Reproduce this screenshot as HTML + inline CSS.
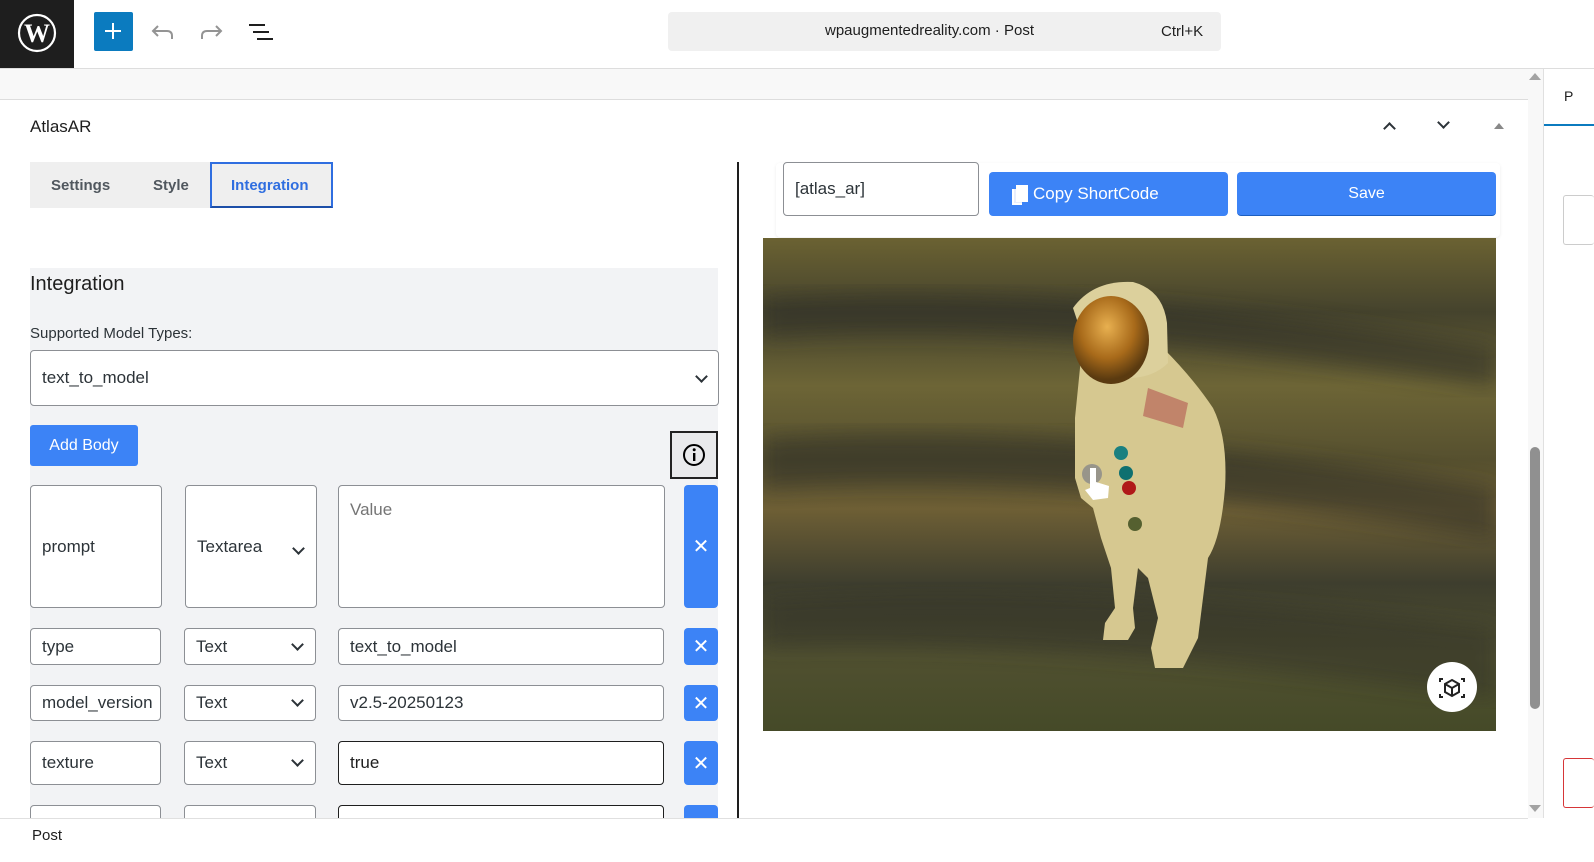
<!DOCTYPE html>
<html><head><meta charset="utf-8"><style>
*{box-sizing:border-box;margin:0;padding:0}
body{width:1594px;height:862px;overflow:hidden;background:#fff;font-family:"Liberation Sans",sans-serif;color:#1e1e1e;position:relative}
.a{position:absolute}
.inp{position:absolute;background:#fff;border:1px solid #8c8f94;border-radius:4px;font-size:17px;color:#2c3338;padding-left:11px;display:flex;align-items:center}
.x{position:absolute;background:#3c83f6;border-radius:4px;color:#fff;font-size:20px;display:flex;align-items:center;justify-content:center}
.chev{position:absolute;width:9px;height:9px;border-right:2px solid #2c3338;border-bottom:2px solid #2c3338;transform:rotate(45deg)}
</style></head><body>
<!-- top bar -->
<div class="a" style="left:0;top:0;width:74px;height:68px;background:#1e1e1e"></div>
<svg class="a" style="left:17px;top:13px" width="40" height="40" viewBox="0 0 40 40"><circle cx="20" cy="20" r="18" fill="none" stroke="#fff" stroke-width="2.2"/><text x="20" y="29" text-anchor="middle" font-family="Liberation Serif" font-weight="bold" font-size="26" fill="#fff">W</text></svg>
<div class="a" style="left:94px;top:12px;width:39px;height:39px;background:#0b7bbf;border-radius:2px"></div>
<div class="a" style="left:105px;top:30px;width:16px;height:2px;background:#fff"></div>
<div class="a" style="left:112px;top:23px;width:2px;height:16px;background:#fff"></div>
<svg class="a" style="left:150px;top:20px" width="26" height="24"><path d="M8 6 L3 11 L8 16 M3 11 H17 Q22 11 22 16 V19" fill="none" stroke="#949494" stroke-width="2"/></svg>
<svg class="a" style="left:198px;top:20px" width="26" height="24"><path d="M18 6 L23 11 L18 16 M23 11 H9 Q4 11 4 16 V19" fill="none" stroke="#949494" stroke-width="2"/></svg>
<div class="a" style="left:249px;top:24px;width:16px;height:2px;background:#1e1e1e"></div>
<div class="a" style="left:253px;top:31px;width:16px;height:2px;background:#1e1e1e"></div>
<div class="a" style="left:257px;top:38px;width:16px;height:2px;background:#1e1e1e"></div>
<div class="a" style="left:668px;top:12px;width:553px;height:39px;background:#f0f0f0;border-radius:4px"></div>
<div class="a" style="left:825px;top:22px;font-size:15px;color:#1e1e1e">wpaugmentedreality.com · Post</div>
<div class="a" style="left:1161px;top:23px;font-size:15px;color:#1e1e1e">Ctrl+K</div>
<div class="a" style="left:0;top:68px;width:1594px;height:1px;background:#ddd"></div>
<div class="a" style="left:0;top:69px;width:1528px;height:31px;background:#f8f8f8;border-bottom:1px solid #ddd"></div>
<!-- scrollbar & sidebar -->
<div class="a" style="left:1528px;top:69px;width:15px;height:749px;background:#f8f8f8"></div>
<div class="a" style="left:1530px;top:447px;width:10px;height:262px;background:#909090;border-radius:5px"></div>
<div class="a" style="left:1529px;top:73px;width:0;height:0;border:6px solid transparent;border-bottom:7px solid #a3a3a3;border-top:0"></div>
<div class="a" style="left:1529px;top:805px;width:0;height:0;border:6px solid transparent;border-top:7px solid #a3a3a3;border-bottom:0"></div>
<div class="a" style="left:1543px;top:69px;width:1px;height:749px;background:#e0e0e0"></div>
<div class="a" style="left:1544px;top:124px;width:50px;height:2px;background:#0b7bbf"></div>
<div class="a" style="left:1563px;top:195px;width:31px;height:50px;border:1px solid #ccc;border-radius:3px;border-right:0"></div>
<div class="a" style="left:1563px;top:758px;width:31px;height:50px;border:1px solid #d63638;border-radius:3px;border-right:0"></div>
<div class="a" style="left:1564px;top:88px;font-size:14px">P</div>
<!-- block header -->
<div class="a" style="left:30px;top:117px;font-size:17px;color:#1e1e1e">AtlasAR</div>
<div class="chev" style="left:1385px;top:124px;transform:rotate(225deg)"></div>
<div class="chev" style="left:1439px;top:118px"></div>
<div class="a" style="left:1494px;top:123px;width:0;height:0;border:5px solid transparent;border-bottom:6px solid #888;border-top:0"></div>
<!-- tabs -->
<div class="a" style="left:30px;top:162px;width:303px;height:46px;background:#efefef"></div>
<div class="a" style="left:51px;top:177px;font-size:15px;color:#50575e;font-weight:bold">Settings</div>
<div class="a" style="left:153px;top:177px;font-size:15px;color:#50575e;font-weight:bold">Style</div>
<div class="a" style="left:210px;top:162px;width:123px;height:46px;border:2px solid #2f6ee0;border-bottom-color:#1d4fa8"></div>
<div class="a" style="left:231px;top:177px;font-size:15px;color:#2f6ee0;font-weight:bold">Integration</div>
<!-- integration panel -->
<div class="a" style="left:30px;top:268px;width:688px;height:550px;background:#f2f3f5"></div>
<div class="a" style="left:30px;top:273px;font-size:20px;color:#1e1e1e">Integration</div>
<div class="a" style="left:30px;top:325px;font-size:15px;color:#2c3338">Supported Model Types:</div>
<div class="inp" style="left:30px;top:350px;width:689px;height:56px">text_to_model</div>
<div class="chev" style="left:697px;top:372px"></div>
<div class="a" style="left:30px;top:425px;width:108px;height:41px;background:#3c83f6;border-radius:3px;color:#fff;font-size:16px;display:flex;align-items:center;justify-content:center">Add Body</div>
<div class="a" style="left:670px;top:431px;width:48px;height:48px;border:2px solid #222;background:#e9eaec"></div>
<svg class="a" style="left:682px;top:443px" width="24" height="24"><circle cx="12" cy="12" r="10" fill="none" stroke="#000" stroke-width="2"/><rect x="11" y="10" width="2.4" height="8" fill="#000"/><circle cx="12.2" cy="6.8" r="1.5" fill="#000"/></svg>
<!-- row1 -->
<div class="inp" style="left:30px;top:485px;width:132px;height:123px">prompt</div>
<div class="inp" style="left:185px;top:485px;width:132px;height:123px">Textarea</div>
<div class="chev" style="left:294px;top:544px"></div>
<div class="inp" style="left:338px;top:485px;width:327px;height:123px;align-items:flex-start;padding-top:14px;color:#757575">Value</div>
<div class="x" style="left:684px;top:485px;width:34px;height:123px">✕</div>
<!-- rows -->
<div class="inp" style="left:30px;top:628px;width:131px;height:37px">type</div>
<div class="inp" style="left:184px;top:628px;width:132px;height:37px">Text</div>
<div class="chev" style="left:293px;top:640px"></div>
<div class="inp" style="left:338px;top:628px;width:326px;height:37px">text_to_model</div>
<div class="x" style="left:684px;top:628px;width:34px;height:37px">✕</div>

<div class="inp" style="left:30px;top:685px;width:131px;height:36px">model_version</div>
<div class="inp" style="left:184px;top:685px;width:132px;height:36px">Text</div>
<div class="chev" style="left:293px;top:696px"></div>
<div class="inp" style="left:338px;top:685px;width:326px;height:36px">v2.5-20250123</div>
<div class="x" style="left:684px;top:685px;width:34px;height:36px">✕</div>

<div class="inp" style="left:30px;top:741px;width:131px;height:44px">texture</div>
<div class="inp" style="left:184px;top:741px;width:132px;height:44px">Text</div>
<div class="chev" style="left:293px;top:756px"></div>
<div class="inp" style="left:338px;top:741px;width:326px;height:44px;border-color:#1e1e1e;color:#1e1e1e">true</div>
<div class="x" style="left:684px;top:741px;width:34px;height:44px">✕</div>

<div class="inp" style="left:30px;top:805px;width:131px;height:30px"></div>
<div class="inp" style="left:184px;top:805px;width:132px;height:30px"></div>
<div class="inp" style="left:338px;top:805px;width:326px;height:30px;border-color:#1e1e1e"></div>
<div class="x" style="left:684px;top:805px;width:34px;height:30px"></div>
<div class="a" style="left:0;top:818px;width:1528px;height:44px;background:#fff;border-top:1px solid #e0e0e0"></div>
<div class="a" style="left:32px;top:827px;font-size:15px;color:#1e1e1e">Post</div>
<!-- divider -->
<div class="a" style="left:737px;top:162px;width:2px;height:656px;background:#1e1e1e"></div>
<!-- right area -->
<div class="a" style="left:776px;top:163px;width:724px;height:74px;background:#fff;border-radius:4px;box-shadow:0 1px 3px rgba(0,0,0,.08)"></div>
<div class="inp" style="left:783px;top:162px;width:196px;height:54px;font-size:17px">[atlas_ar]</div>
<div class="a" style="left:989px;top:172px;width:239px;height:44px;background:#3c83f6;border-radius:4px"></div>
<div class="a" style="left:1012px;top:189px;width:10px;height:16px;border:2px solid #fff;border-top:0;border-right:0;background:#e8eefc"></div>
<div class="a" style="left:1016px;top:185px;width:12px;height:17px;background:#fff"></div>
<div class="a" style="left:1033px;top:184px;font-size:17px;color:#fff">Copy ShortCode</div>
<div class="a" style="left:1237px;top:172px;width:259px;height:44px;background:#3c83f6;border-radius:4px;border-bottom:1px solid #1d5fc0;color:#fff;font-size:16px;display:flex;align-items:center;justify-content:center">Save</div>
<!-- image -->
<svg class="a" style="left:763px;top:238px" width="733" height="493" viewBox="0 0 733 493">
<defs>
<linearGradient id="bg" x1="0" y1="0" x2="0" y2="1">
<stop offset="0" stop-color="#6b6232"/><stop offset=".15" stop-color="#45432d"/><stop offset=".3" stop-color="#6d6536"/><stop offset=".45" stop-color="#56502f"/><stop offset=".55" stop-color="#6e5f35"/><stop offset=".7" stop-color="#3e3e2e"/><stop offset=".85" stop-color="#505030"/><stop offset="1" stop-color="#454a28"/></linearGradient>
<radialGradient id="v" cx=".45" cy=".35" r=".6"><stop offset="0" stop-color="#e8b050"/><stop offset=".6" stop-color="#a86a1a"/><stop offset="1" stop-color="#5a3a10"/></radialGradient>
<filter id="bl"><feGaussianBlur stdDeviation="10"/></filter>
</defs>
<rect width="733" height="493" fill="url(#bg)"/>
<path d="M0 60 Q300 40 733 110 L733 150 Q300 80 0 100Z" fill="#2e2e28" opacity=".55" filter="url(#bl)"/>
<path d="M0 200 Q300 180 733 250 L733 300 Q300 230 0 250Z" fill="#2e2e28" opacity=".55" filter="url(#bl)"/>
<path d="M0 360 Q300 340 733 390 L733 460 Q300 400 0 410Z" fill="#2e2e28" opacity=".45" filter="url(#bl)"/>
<g>
<!-- body -->
<path d="M318 120 Q325 100 345 95 L400 110 Q430 140 450 170 Q465 200 462 250 Q458 300 445 320 L440 360 L435 400 L420 430 L392 430 L388 410 L395 380 L385 340 L375 330 L370 370 L372 390 L365 402 L340 402 L342 385 L352 370 L348 330 L338 300 L330 270 L318 260 L312 240 L312 180 Z" fill="#d6c890"/>
<!-- hood -->
<path d="M310 70 Q330 42 370 44 Q400 52 404 85 L405 125 Q390 140 365 140 L330 130 Z" fill="#dcd09c"/>
<ellipse cx="348" cy="102" rx="38" ry="44" fill="url(#v)"/>
<path d="M385 150 L425 165 L420 190 L380 178Z" fill="#b8675a" opacity=".7"/>
<circle cx="372" cy="286" r="7" fill="#556030"/>
<circle cx="358" cy="215" r="7" fill="#1a8080"/><circle cx="363" cy="235" r="7" fill="#0e7070"/><circle cx="366" cy="250" r="7" fill="#b01818"/>
<circle cx="329" cy="236" r="10" fill="#888" opacity=".8"/>
<path d="M327 230 V250 L322 252 L330 262 L345 260 L346 248 L333 244 V230Z" fill="#fff"/>
</g>
<circle cx="689" cy="449" r="25" fill="#fff"/>
<path d="M680 441 H677 V444 M698 441 H701 V444 M680 459 H677 V456 M698 459 H701 V456 M689 442 L696 446 V454 L689 458 L682 454 V446Z M682 446 L689 450 L696 446 M689 450 V458" fill="none" stroke="#222" stroke-width="2"/>
</svg>
</body></html>
